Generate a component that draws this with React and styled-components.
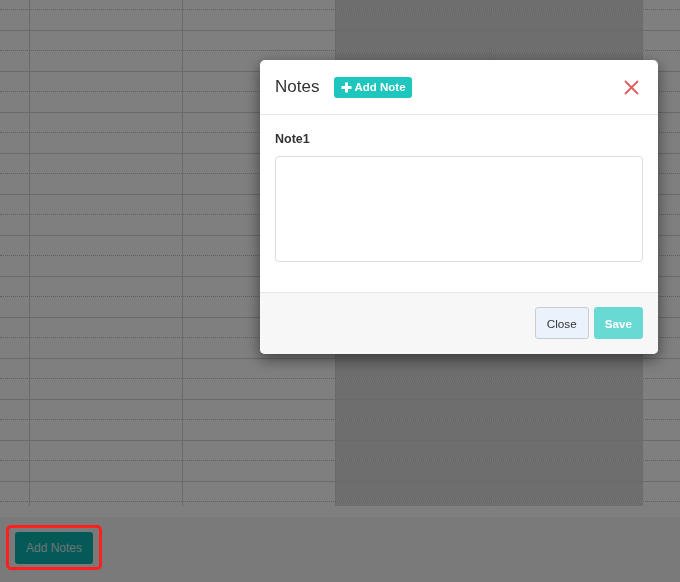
import React from 'react'
import styled, { createGlobalStyle } from 'styled-components'

const GlobalStyle = createGlobalStyle`
body {
  margin: 0;
  font-family: "Liberation Sans", Arial, sans-serif;
  overflow: hidden;
  background: #f4f4f4;
}
* { box-sizing: border-box; }
`;

const Page = styled.div`
width: 680px;
height: 582px;
display: flex;
flex-direction: column;
`;

const Sheet = styled.div`
flex: none;
height: 506px;
overflow: hidden;
background: #ffffff;
display: flex;
flex-direction: column;
`;

const Row = styled.div`
flex: none;
display: grid;
grid-template-columns: 30px 153px 153px 154px 153px 1fr;
height: ${p => p.$h}px;
border-bottom: 1px ${p => (p.$dotted ? 'dotted #bdbdbd' : 'solid #d4d4d4')};
`;

const Cell = styled.div`
border-right: 1px solid ${p => (p.$selected ? '#d8d8d8' : '#d4d4d4')};
background: ${p => (p.$selected ? '#dcdcdc' : 'transparent')};
&:last-child { border-right: none; }
`;

const ScrollStrip = styled.div`
flex: none;
height: 11px;
background: #fefefe;
`;

const BottomBar = styled.div`
flex: 1;
background: #f4f4f4;
padding: 8px 6px;
display: flex;
align-items: flex-start;
`;

const Highlight = styled.div`
position: relative;
padding: 7px 9px 6px 9px;
&::after {
  content: '';
  position: absolute;
  inset: 0;
  border: 3px solid #ff1f1f;
  border-radius: 5px;
  z-index: 30;
}
`;

const AddNotesButton = styled.button`
display: block;
width: 78px;
height: 32px;
border: none;
border-radius: 3px;
background: #0ab4b0;
color: #d6eceb;
font-family: inherit;
font-size: 12px;
padding: 0;
`;

const Overlay = styled.div`
position: fixed;
inset: 0;
background: rgba(0, 0, 0, 0.5);
z-index: 10;
`;

const Modal = styled.div`
position: fixed;
top: 60px;
left: 260px;
width: 398px;
background: #ffffff;
border-radius: 5px;
overflow: hidden;
box-shadow: 0 5px 15px rgba(0, 0, 0, 0.5);
z-index: 20;
`;

const Header = styled.div`
height: 55px;
padding: 0 15px;
display: flex;
align-items: center;
border-bottom: 1px solid #e5e5e5;
`;

const Title = styled.h4`
margin: 0;
font-size: 17px;
font-weight: normal;
color: #333333;
`;

const AddNoteButton = styled.button`
margin-left: 15px;
height: 21px;
padding: 0 6px 0 7px;
display: flex;
align-items: center;
gap: 2px;
border: none;
border-radius: 3px;
background: #1fc6bd;
color: #ffffff;
font-family: inherit;
font-size: 11.5px;
font-weight: bold;
`;

const CloseIcon = styled.button`
margin-left: auto;
margin-right: 4px;
padding: 0;
border: none;
background: none;
display: flex;
`;

const Body = styled.div`
padding: 15px 15px 30px;
`;

const Label = styled.label`
display: block;
font-size: 12.5px;
font-weight: bold;
line-height: 18px;
color: #333333;
margin-bottom: 8px;
`;

const TextArea = styled.textarea`
display: block;
width: 100%;
height: 106px;
border: 1px solid #dcdcdc;
border-radius: 4px;
resize: none;
`;

const Footer = styled.div`
background: #f7f7f7;
border-top: 1px solid #e5e5e5;
padding: 14px 15px 15px;
display: flex;
justify-content: flex-end;
gap: 5px;
`;

const FooterButton = styled.button`
height: 32px;
padding: 0 ${p => (p.$primary ? 10 : 11)}px;
border: 1px solid ${p => (p.$primary ? '#69d9d3' : '#c9cdd1')};
border-radius: 3px;
background: ${p => (p.$primary ? '#69d9d3' : '#eaf3fc')};
color: ${p => (p.$primary ? '#ffffff' : '#333333')};
font-family: inherit;
font-size: 11.7px;
font-weight: ${p => (p.$primary ? 'bold' : 'normal')};
`;

// heights include the bottom border (border-box)
const rows = Array.from({ length: 28 }, (_, i) => ({
  dotted: i % 2 === 0,
  h: i === 0 ? 10 : i % 2 === 0 ? 20 : 21,
}));

const App = () => {
  return (
    <>
      <GlobalStyle />
      <Page>
        <Sheet>
          {rows.map((r, i) => (
            <Row key={i} $dotted={r.dotted} $h={r.h}>
              {[0, 1, 2, 3, 4, 5].map(c => (
                <Cell key={c} $selected={c === 3 || c === 4} />
              ))}
            </Row>
          ))}
        </Sheet>
        <ScrollStrip />
        <BottomBar>
          <Highlight>
            <AddNotesButton>Add Notes</AddNotesButton>
          </Highlight>
        </BottomBar>
      </Page>
      <Overlay />
      <Modal>
        <Header>
          <Title>Notes</Title>
          <AddNoteButton>
            <svg width="11" height="11" viewBox="0 0 11 11">
              <path d="M5.5 0.5v10M0.5 5.5h10" stroke="#fff" strokeWidth="3" />
            </svg>
            Add Note
          </AddNoteButton>
          <CloseIcon>
            <svg width="15" height="15" viewBox="0 0 15 15">
              <path d="M1 1l13 13M14 1L1 14" stroke="#e35b5b" strokeWidth="1.8" />
            </svg>
          </CloseIcon>
        </Header>
        <Body>
          <Label>Note1</Label>
          <TextArea />
        </Body>
        <Footer>
          <FooterButton>Close</FooterButton>
          <FooterButton $primary>Save</FooterButton>
        </Footer>
      </Modal>
    </>
  )
}

export default App
